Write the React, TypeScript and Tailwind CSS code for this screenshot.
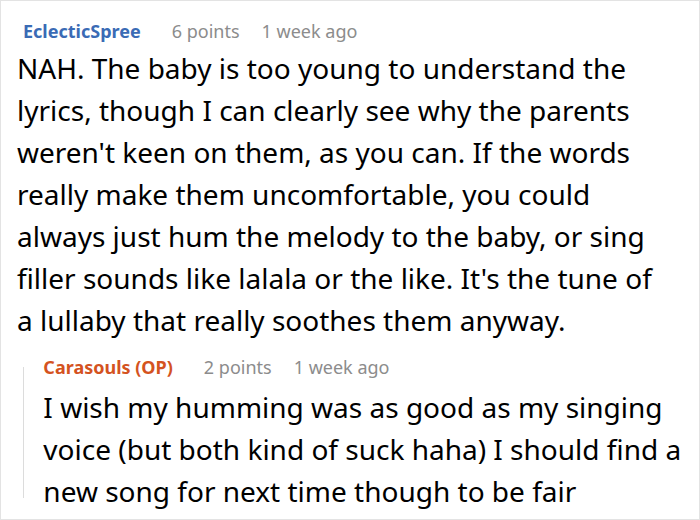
export default function App() {
  return (
    <div
      className="w-[700px] h-[520px] bg-white border border-[#e3e3e3] overflow-hidden text-black"
      style={{ fontFamily: '"Noto Sans", "Open Sans", sans-serif' }}
    >
      <div className="pl-[16px] pr-[16px] pt-[17px]">
        {/* top comment */}
        <div className="flex items-baseline pl-[6px] text-[18px] leading-[26px]">
          <span className="font-bold text-[#3a6bb5]">EclecticSpree</span>
          <span className="ml-[31px] text-[#8c8c8c]">6 points</span>
          <span className="ml-[22px] text-[#8c8c8c]">1 week ago</span>
        </div>
        <p className="text-[28px] leading-[42px] mt-[3px] pr-[13px]">
          NAH. The baby is too young to understand the lyrics, though I can clearly see why the parents weren't keen on them, as you can. If the words really make them uncomfortable, you could always just hum the melody to the baby, or sing filler sounds like lalala or the like. It's the tune of a lullaby that really soothes them anyway.
        </p>

        {/* reply */}
        <div className="flex mt-[13px] ml-[6px]">
          <div className="w-px bg-[#dcdcdc] mt-[13px] mb-[14px]" />
          <div className="pl-[20px]">
            <div className="flex items-baseline text-[18px] leading-[26px]">
              <span className="font-bold text-[#d4531f]">Carasouls (OP)</span>
              <span className="ml-[31px] text-[#8c8c8c]">2 points</span>
              <span className="ml-[22px] text-[#8c8c8c]">1 week ago</span>
            </div>
            <p className="text-[28px] leading-[42px] mt-[6px]">
              I wish my humming was as good as my singing voice (but both kind of suck haha) I should find a new song for next time though to be fair
            </p>
          </div>
        </div>
      </div>
    </div>
  )
}
